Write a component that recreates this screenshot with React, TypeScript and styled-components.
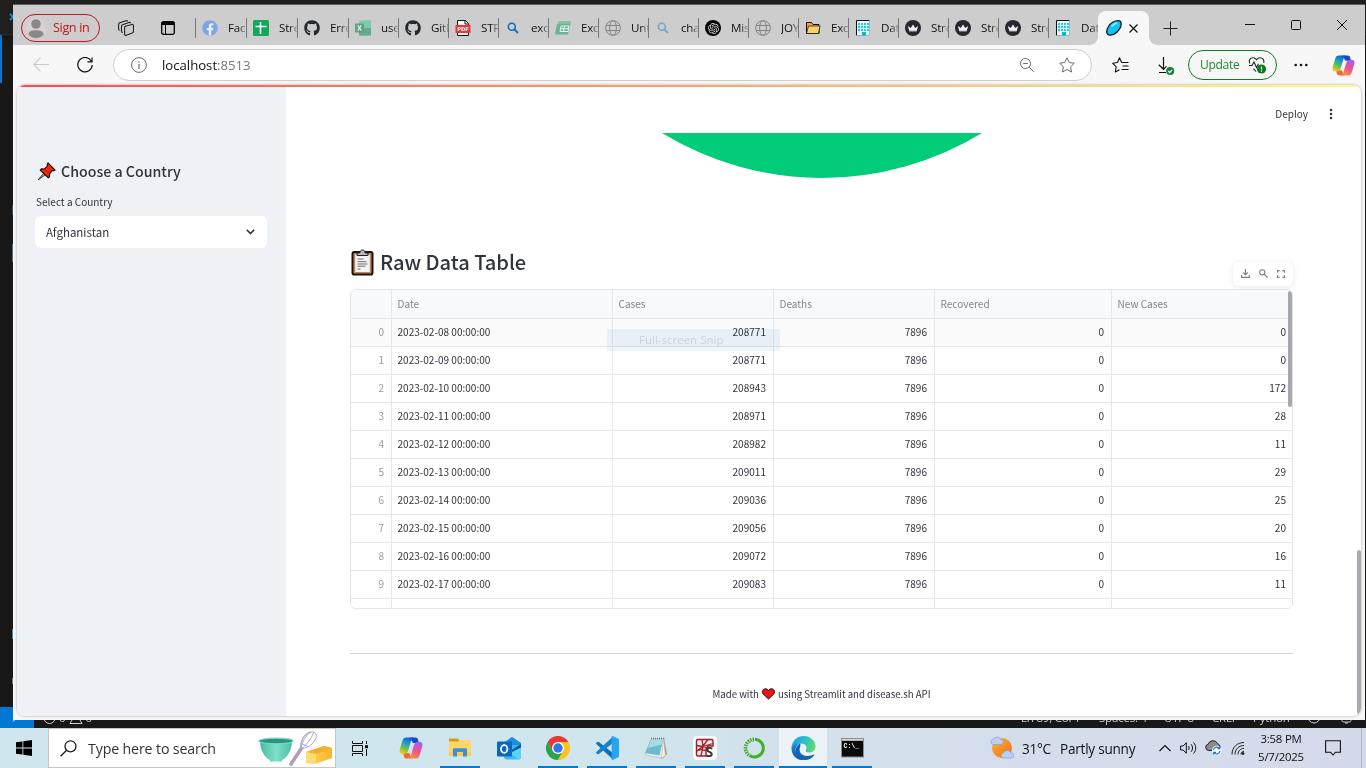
import React from "react";
import styled, { createGlobalStyle, css } from "styled-components";
import { FaGithub, FaFacebook } from "react-icons/fa";
import { SiOpenai } from "react-icons/si";

const uiFont = `"Open Sans", "Noto Sans", sans-serif`;
const pageFont = `"Noto Sans CJK SC", "Noto Sans", sans-serif`;

const GlobalStyle = createGlobalStyle`
  * { box-sizing: border-box; }
  body { margin: 0; overflow: hidden; font-family: ${uiFont}; }
  svg { display: block; flex: none; }
`;

/* ---------- desktop ---------- */

const Screen = styled.div`
  width: 1366px;
  height: 768px;
  display: flex;
  flex-direction: column;
  background: #181818;
`;

const Desktop = styled.div`
  position: relative;
  height: 728px;
  display: flex;
  flex-direction: column;
  background: #181818;
  overflow: hidden;
`;

const EditorTop = styled.div`
  height: 35px;
  background: #1f1f1f;
  border-bottom: 1px solid #2b2b2b;
  svg { margin: 12px 0 0 9px; }
`;

const EditorRail = styled.div`
  flex: 1;
  display: flex;
  flex-direction: column;
  align-items: flex-start;
`;

const RailMarker = styled.div`
  width: 2px;
  height: 48px;
  background: #0078d4;
`;

const RailGlyph = styled.div<{ $top: number; $height: number; $color: string }>`
  width: 1px;
  height: ${(p) => p.$height}px;
  margin: ${(p) => p.$top}px 0 0 12px;
  background: ${(p) => p.$color};
`;

const StatusBar = styled.div`
  height: 21px;
  display: flex;
  align-items: center;
  background: #181818;
  border-top: 1px solid #2b2b2b;
  color: #ccc;
  font-size: 11.5px;
  line-height: 20px;
  white-space: nowrap;
`;

const RemoteBadge = styled.div`
  width: 34px;
  height: 21px;
  margin-top: -1px;
  background: #0078d4;
  svg { margin: 5px 0 0 12px; }
`;

const StatusProblems = styled.div`
  display: flex;
  align-items: center;
  gap: 3px;
  margin-left: 9px;
  width: 978px;
`;

const StatusItem = styled.span<{ $width: number }>`
  width: ${(p) => p.$width}px;
  letter-spacing: -0.2px;
`;

/* ---------- browser window ---------- */

const BrowserWindow = styled.div`
  position: absolute;
  left: 13px;
  top: 4px;
  width: 1352px;
  height: 716px;
  display: flex;
  flex-direction: column;
  background: #f7f7f7;
  border-top: 1px solid #606060;
`;

const TitleBar = styled.div`
  height: 40px;
  padding: 6px 0 0 8px;
  display: flex;
  align-items: center;
  background: #cdcdcd;
`;

const SignIn = styled.div`
  width: 79px;
  height: 28px;
  display: flex;
  align-items: center;
  gap: 7px;
  padding-left: 4px;
  border: 1px solid #c4161c;
  border-radius: 14px;
  color: #c4161c;
  font-size: 12.6px;
  line-height: 20px;
  letter-spacing: -0.35px;
  white-space: nowrap;
`;

const BarIcon = styled.div<{ $left: number }>`
  margin-left: ${(p) => p.$left}px;
  display: flex;
`;

const TabStrip = styled.div`
  display: flex;
  align-items: center;
  margin-left: 20px;
`;

const TabDivider = styled.div`
  width: 1px;
  height: 20px;
  background: #777;
`;

const Tab = styled.div<{ $width: number; $last?: boolean }>`
  width: ${(p) => p.$width}px;
  height: 20px;
  padding-left: 6px;
  display: flex;
  align-items: center;
  gap: 10px;
  ${(p) => !p.$last && css`border-right: 1px solid #777;`}
`;

const TabTitle = styled.span`
  flex: 1;
  min-width: 0;
  overflow: hidden;
  white-space: nowrap;
  font-size: 11.6px;
  line-height: 20px;
  letter-spacing: -0.2px;
  color: #111;
  mask-image: linear-gradient(to right, #000 55%, rgba(0, 0, 0, 0.25) 100%);
`;

const ActiveTab = styled.div`
  position: relative;
  width: 51px;
  height: 34px;
  margin-left: -1px;
  padding-left: 8px;
  display: flex;
  align-items: center;
  gap: 7px;
  background: #f7f7f7;
  border-radius: 8px 8px 0 0;
  &::before, &::after {
    content: "";
    position: absolute;
    bottom: 0;
    width: 8px;
    height: 8px;
  }
  &::before { left: -8px; background: radial-gradient(circle at 0 0, transparent 7.5px, #f7f7f7 8px); }
  &::after { right: -8px; background: radial-gradient(circle at 100% 0, transparent 7.5px, #f7f7f7 8px); }
`;

const WindowControls = styled.div`
  display: flex;
  align-self: flex-start;
  margin: -6px 0 0 auto;
`;

const ControlButton = styled.div`
  width: 46px;
  height: 40px;
  display: flex;
  align-items: center;
  justify-content: center;
`;

const Toolbar = styled.div`
  height: 40px;
  padding-left: 20px;
  display: flex;
  align-items: center;
`;

const AddressBar = styled.div`
  width: 979px;
  height: 32px;
  margin-left: 20px;
  padding: 0 16px 0 17px;
  display: flex;
  align-items: center;
  background: #fff;
  border: 1px solid #cecece;
  border-radius: 16px;
`;

const Url = styled.div`
  flex: 1;
  margin-left: 15px;
  font-size: 13.2px;
  line-height: 20px;
  letter-spacing: -0.02px;
  color: #111;
  span { color: #767676; }
`;

const UpdateButton = styled.div`
  width: 89px;
  height: 30px;
  margin-left: 13px;
  padding: 0 9px 0 11px;
  display: flex;
  align-items: center;
  justify-content: space-between;
  border: 1px solid #0f7b26;
  border-radius: 15px;
  color: #1a8a34;
  font-size: 12.1px;
  letter-spacing: -0.35px;
  line-height: 20px;
`;

/* ---------- web page ---------- */

const Viewport = styled.div`
  width: 1344px;
  height: 631px;
  margin-left: 4px;
  display: flex;
  flex-direction: column;
  background: #fff;
  border-radius: 8px;
  overflow: hidden;
  position: relative;
  box-shadow: 0 0 2px 1px rgba(0, 0, 0, 0.15);
  font-family: ${pageFont};
  color: #31333f;
`;

const Decoration = styled.div`
  height: 2px;
  background: linear-gradient(to right, #ff4b4b, #fffd80);
`;

const Body = styled.div`
  flex: 1;
  min-height: 0;
  display: flex;
`;

const Sidebar = styled.aside`
  width: 269px;
  padding: 72px 19px 0 18px;
  background: #eef2f7;
`;

const SideHeading = styled.h2`
  margin: 0;
  height: 24px;
  display: flex;
  align-items: center;
  gap: 5px;
  padding-left: 2px;
  font-size: 14.2px;
  line-height: 24px;
  font-weight: 500;
  white-space: nowrap;
`;

const FieldLabel = styled.div`
  margin: 10px 0 6px 1px;
  font-size: 10px;
  line-height: 17px;
`;

const SelectBox = styled.div`
  height: 32px;
  padding: 0 12px 0 11px;
  display: flex;
  align-items: center;
  justify-content: space-between;
  background: #fff;
  border-radius: 6px;
  font-size: 11.5px;
  line-height: 20px;
`;

const Main = styled.main`
  flex: 1;
  display: flex;
  flex-direction: column;
`;

const PageHeader = styled.header`
  height: 46px;
  padding: 7px 28px 0 0;
  display: flex;
  align-items: center;
  justify-content: flex-end;
  gap: 21px;
  font-size: 10px;
  line-height: 16px;
`;

const Content = styled.div`
  padding: 0 68px 0 64px;
  display: flex;
  flex-direction: column;
`;

const ChartTail = styled.div`
  height: 112px;
  display: flex;
  justify-content: center;
`;

const SectionRow = styled.div`
  height: 44px;
  display: flex;
  justify-content: space-between;
`;

const SectionTitle = styled.h3`
  margin: 0;
  height: 34px;
  display: flex;
  align-items: center;
  gap: 6px;
  padding-left: 1px;
  font-size: 20.1px;
  line-height: 30px;
  font-weight: 500;
  letter-spacing: -0.05px;
  white-space: nowrap;
`;

const TableTools = styled.div`
  width: 60px;
  height: 24px;
  margin-top: 17px;
  padding: 0 1px 1px 0;
  display: flex;
  align-items: center;
  justify-content: center;
  gap: 9px;
  background: #fff;
  border-radius: 6px;
  box-shadow: 0 1px 6px rgba(0, 0, 0, 0.1);
`;

const DataTable = styled.div`
  position: relative;
  height: 320px;
  border: 1px solid #e3e5e9;
  border-radius: 6px;
  overflow: hidden;
`;

const TableRow = styled.div<{ $kind?: "head" | "hover" }>`
  display: grid;
  grid-template-columns: 41px 221px 161px 161px 177px 180px;
  height: ${(p) => (p.$kind === "head" ? 29 : 28)}px;
  border-bottom: 1px solid #e6e7ea;
  background: ${(p) => (p.$kind === "head" ? "#f8f9fb" : p.$kind === "hover" ? "#fafafa" : "#fff")};
  color: ${(p) => (p.$kind === "head" ? "#83858c" : "#31333f")};
  line-height: ${(p) => (p.$kind === "head" ? 28 : 26)}px;
`;

const Cell = styled.div<{ $right?: boolean; $muted?: boolean }>`
  padding: 0 7px 0 5.5px;
  border-right: 1px solid #e6e7ea;
  font-size: 10.05px;
  white-space: nowrap;
  text-align: ${(p) => (p.$right ? "right" : "left")};
  ${(p) => p.$muted && css`color: #9a9ca3;`}
  &:last-child { border-right: 0; padding-right: 6px; }
`;

const TableScrollbar = styled.div`
  position: absolute;
  right: 0;
  top: 1px;
  width: 4px;
  height: 116px;
  border-radius: 2px;
  background: #a6a7ae;
`;

const Rule = styled.hr`
  width: 100%;
  height: 1px;
  margin: 44px 0 31px;
  border: 0;
  background: #d5d6d9;
`;

const Footer = styled.footer`
  display: flex;
  align-items: center;
  justify-content: center;
  gap: 3px;
  height: 18px;
  font-size: 9.62px;
  line-height: 18px;
`;

const PageScrollbar = styled.div`
  position: absolute;
  right: 0;
  top: 465px;
  width: 4px;
  height: 164px;
  border-radius: 2px;
  background: #a9a9af;
`;

const SnipHint = styled.div`
  position: absolute;
  left: 607px;
  top: 329px;
  width: 173px;
  height: 22px;
  padding-left: 32px;
  background: #edf5fc;
  mix-blend-mode: multiply;
  color: #d3d7dc;
  font-size: 11.5px;
  line-height: 21px;
  white-space: nowrap;
`;

/* ---------- taskbar ---------- */

const TaskBar = styled.div`
  height: 40px;
  display: flex;
  background: linear-gradient(to right, #cfe6ee 0%, #d0e5ee 45%, #d4dfec 65%, #d5daea 100%);
`;

const TaskButton = styled.div<{ $state?: "open" | "active" }>`
  width: 48px;
  height: 40px;
  margin-right: 1px;
  display: flex;
  flex-direction: column;
  align-items: center;
  background: ${(p) => (p.$state === "active" ? "#ecf2f7" : "transparent")};
  &::after {
    content: "";
    width: ${(p) => (p.$state === "active" ? 48 : 40)}px;
    height: 2px;
    background: ${(p) => (p.$state ? "#0078d4" : "transparent")};
  }
`;

const TaskIcon = styled.div`
  height: 38px;
  padding-top: 2px;
  display: flex;
  align-items: center;
`;

const SystemButton = styled.div`
  width: 48px;
  height: 40px;
  display: flex;
  align-items: center;
  justify-content: center;
`;

const Pinned = styled.div`
  display: flex;
  margin-left: 3px;
`;

const SearchBox = styled.div`
  width: 288px;
  height: 40px;
  padding: 0 2px 0 11px;
  display: flex;
  align-items: center;
  background: #fff;
  border: 1px solid #c6c6c6;
`;

const SearchText = styled.span`
  flex: 1;
  margin-left: 11px;
  font-size: 14.2px;
  letter-spacing: -0.14px;
  color: #333;
  white-space: nowrap;
`;

const Weather = styled.div`
  display: flex;
  align-items: center;
  margin-left: 113px;
  width: 146px;
  font-size: 13.6px;
  letter-spacing: -0.25px;
  color: #111;
  white-space: nowrap;
  span:nth-of-type(1) { width: 38px; margin-left: 8px; }
`;

const Tray = styled.div`
  display: flex;
  align-items: center;
  gap: 8.500px;
  margin-left: 23px;
`;

const Clock = styled.div`
  width: 56px;
  margin-left: -1px;
  text-align: center;
  font-size: 11.4px;
  line-height: 18px;
  letter-spacing: -0.2px;
  color: #111;
`;

const TrayEnd = styled.div`
  flex: 1;
  display: flex;
  align-items: center;
  padding-left: 16px;
  border-right: 1px solid #aeb6c2;
  margin-right: 4px;
`;

/* ---------- icons ---------- */

const CopilotIcon = ({ id, size }: { id: string; size: number }) => (
  <svg width={size} height={size} viewBox="0 0 24 24">
    <defs>
      <linearGradient id={`${id}-a`} x1="0.7" y1="0" x2="0.3" y2="1">
        <stop offset="0" stopColor="#1556d6" />
        <stop offset="0.35" stopColor="#1c9cc9" />
        <stop offset="0.65" stopColor="#5fbf55" />
        <stop offset="1" stopColor="#f6c414" />
      </linearGradient>
      <linearGradient id={`${id}-b`} x1="0.7" y1="0" x2="0.3" y2="1">
        <stop offset="0" stopColor="#a064ee" />
        <stop offset="0.5" stopColor="#ee4f92" />
        <stop offset="1" stopColor="#fb8f3c" />
      </linearGradient>
    </defs>
    <path d="M11 1.5h5.2c1.6 0 2.4.9 2.8 2.3l.9 3.2h-6z" fill="#1748c8" />
    <path d="M13 22.500H7.800c-1.600 0-2.400-.9-2.800-2.300L4.100 17h6z" fill="#f26a3c" />
    <path d="M7.500 1.500h7c-1.500.6-2 1.900-2.500 3.600L9.300 14c-.8 2.600-1.700 4-4.300 4H3.500C.8 18 0 16 .8 13.300L3.300 5C4 2.600 5 1.500 7.500 1.500z" fill={`url(#${id}-a)`} />
    <path d="M16.500 22.500h-7c1.500-.6 2-1.900 2.500-3.600L14.700 10c.8-2.600 1.700-4 4.300-4h1.500c2.700 0 3.500 2 2.700 4.700L20.700 19c-.7 2.400-1.700 3.500-4.200 3.500z" fill={`url(#${id}-b)`} />
  </svg>
);

const GlobeIcon = () => (
  <svg width="16" height="16" viewBox="0 0 16 16" fill="none" stroke="#858585">
    <circle cx="8" cy="8" r="7.400" />
    <ellipse cx="8" cy="8" rx="3.400" ry="7.400" />
    <path d="M1.300 5.500h13.400M1.300 10.500h13.400" />
  </svg>
);

const SearchTabIcon = ({ color }: { color: string }) => (
  <svg width="16" height="16" viewBox="0 0 16 16" fill="none" stroke={color}>
    <circle cx="6.800" cy="6.800" r="3.500" strokeWidth="1.600" />
    <path d="M9.400 9.400l3.600 3.600" strokeWidth="2" />
  </svg>
);

const SheetIcon = () => (
  <svg width="16" height="16" viewBox="0 0 16 16">
    <rect width="16" height="16" rx="1.500" fill="#0fa958" />
    <path d="M2.500 6.500h11M7.500 2v12" stroke="#fff" strokeWidth="1.600" />
  </svg>
);

const ExcelIcon = () => (
  <svg width="16" height="16" viewBox="0 0 16 16">
    <rect x="4" y="0.500" width="12" height="15" rx="1" fill="#7fc9a8" />
    <path d="M10 .5h6v5h-6z" fill="#76cfae" />
    <path d="M4 8h12v7.500H4z" fill="#6aa98c" />
    <rect y="3.500" width="9" height="9" rx="1" fill="#5fa286" />
    <path d="M2.800 5.500l3.400 5M6.200 5.500l-3.400 5" stroke="#fff" strokeWidth="1.200" />
  </svg>
);

const ExcelOnlineIcon = () => (
  <svg width="16" height="16" viewBox="0 0 16 16">
    <path d="M3.500 1H15a1 1 0 0 1 1 1l-1.500 8H2z" fill="#7cc4a2" />
    <path d="M2 4h13l-2 10.500H1c-1 0-1-1-.8-2z" fill="#6ab494" />
    <path d="M6 6h8l-1 5.500H5zM9.500 6l-1 5.500M5.500 8.700h8" fill="none" stroke="#e9f6ef" strokeWidth="1" />
  </svg>
);

const PdfIcon = () => (
  <svg width="16" height="16" viewBox="0 0 16 16">
    <path d="M2.500 .5h8l3 3v12h-11z" fill="#fff" stroke="#111" />
    <path d="M10 .5v3.500h3.500" fill="none" stroke="#111" />
    <rect x="0.500" y="5" width="15" height="8" rx="0.500" fill="#f6302f" />
    <text x="8" y="11" textAnchor="middle" fontFamily="DejaVu Sans, sans-serif" fontWeight="700" fontSize="5.200" fill="#fff">PDF</text>
  </svg>
);

const FolderTabIcon = () => (
  <svg width="16" height="16" viewBox="0 0 16 16" stroke="#111" strokeWidth="1">
    <path d="M1.500 13.500v-11h5l1.500 2h6v9z" fill="#f0a732" />
    <path d="M1.500 13.500l2-7.500h11.500l-1.500 7.500z" fill="#ffd06a" strokeWidth="0.700" />
  </svg>
);

const BuildingIcon = () => (
  <svg width="16" height="16" viewBox="0 0 16 16">
    <path d="M1 .5h14V15H1z" fill="#e9fafc" />
    <path d="M1.500 16V.5h13" fill="none" stroke="#111" />
    <path d="M14.500 .5V15.500H1" fill="none" stroke="#7fb4bf" strokeWidth="0.800" />
    {[3, 6, 9].map((y) =>
      [3, 6, 9, 12].map((x) => <rect key={`${x}-${y}`} x={x} y={y} width="2" height="2" fill="#12d0f2" />)
    )}
    <path d="M7 12h4v3.500H7z" fill="#0ab4dc" />
  </svg>
);

const CrownIcon = () => (
  <svg width="16" height="16" viewBox="0 0 16 16">
    <circle cx="8" cy="8" r="8" fill="#262730" />
    <path d="M2.800 6l3 2L8 4.500 10.200 8l3-2-1.600 5.200H4.400z" fill="#f1f1f3" />
    <path d="M4.500 10.500h7v.8h-7z" fill="#aaabb2" />
  </svg>
);

const OpenAiBadge = styled.div`
  width: 16px;
  height: 16px;
  display: flex;
  align-items: center;
  justify-content: center;
  border-radius: 50%;
  background: #000;
  color: #ddd;
  flex: none;
`;

const PushpinIcon = () => (
  <svg width="19" height="19" viewBox="0 0 19 19">
    <path d="M1 18l6-7 1.500 1.500z" fill="#ccc" stroke="#222" strokeWidth="0.900" />
    <path d="M11 1l7 7-1.600.8-1.200-.2-2.700 3.200.1 3-1.300.9-8-7.600 1-1.200 3.200.1 2.900-2.900-.2-1.600z" fill="#f3290b" stroke="#1c0906" strokeWidth="1.100" />
    <path d="M7.800 7.200l4.500 4.400" stroke="#b81c08" strokeWidth="0.800" />
  </svg>
);

const ClipboardIcon = () => (
  <svg width="23" height="27" viewBox="0 0 23 27">
    <rect x="1.500" y="3" width="20" height="22.500" rx="1.800" fill="#c68350" stroke="#161616" strokeWidth="2" />
    <rect x="4.200" y="5.500" width="14.600" height="17.500" fill="#f4f4f4" />
    <path d="M6 6.500V4h2.800C9.300 1.700 10 1 11.500 1s2.200.7 2.700 3H17v2.500z" fill="#b9b9b9" stroke="#222" strokeWidth="1" />
    <path d="M6.500 10h6M6.500 12.700h9M6.500 15h10M6.500 17.200h8M6.500 20h3" stroke="#6e6e6e" strokeWidth="1" />
  </svg>
);

const HeartIcon = () => (
  <svg width="13" height="12" viewBox="0 0 13 12">
    <path d="M6.500 11L1.200 6C-.5 3.500 1.300.8 3.500.8c1.300 0 2.400.7 3 2 .6-1.300 1.700-2 3-2 2.200 0 4 2.700 2.300 5.200z" fill="#fb0d12" stroke="#16090a" strokeWidth="1" />
  </svg>
);

const CloudShape = ({ x, y }: { x: number; y: number }) => (
  <path transform={`translate(${x} ${y})`} d="M3 8a2.600 2.600 0 0 1-.2-5.200A3.900 3.900 0 0 1 10 3a2.500 2.500 0 0 1 .5 5z" fill="#b9d0f4" stroke="#84a5dd" strokeWidth="0.700" />
);

const SearchArt = () => (
  <svg width="75" height="36" viewBox="0 0 75 36">
    <defs>
      <linearGradient id="bowl" x1="0" x2="1">
        <stop offset="0" stopColor="#49b8a0" />
        <stop offset="0.500" stopColor="#7fe0c8" />
        <stop offset="1" stopColor="#4dbfa6" />
      </linearGradient>
      <linearGradient id="butter" x1="0" x2="1">
        <stop offset="0" stopColor="#ffd65a" />
        <stop offset="1" stopColor="#f7b52d" />
      </linearGradient>
    </defs>
    <path d="M2 11h32c0 9-5 17-10 19v1.500H12V30C7 28 2 20 2 11z" fill="url(#bowl)" />
    <ellipse cx="18" cy="11" rx="17" ry="2.800" fill="#2f927e" stroke="#74dcc4" strokeWidth="1.200" />
    <path d="M33 34l10-15" stroke="#a9a0bd" strokeWidth="3.600" strokeLinecap="round" />
    <g fill="none" stroke="#a99fbc" strokeWidth="0.900">
      <path d="M43 19c-1-7 2-15 9-17 6-1 8 3 5 8-3 6-9 8-14 9z" />
      <path d="M43 19c1-6 4-13 10-17M43 19c5-4 10-9 12.500-16.500M43 19C42 11 47 5 51 2.500" />
      <path d="M44.500 14l6 3" />
    </g>
    <path d="M48 22l18-6 8 2v10l-17 6-9-1z" fill="url(#butter)" />
    <path d="M48 22l18-6 8 2-16 6z" fill="#f4ae2b" />
    <path d="M48 22l10 2v10l-8-1.200c-1.400-.2-2-.8-2-2z" fill="#ffdd73" />
  </svg>
);

const tabs: { title: string; width: number; icon: React.ReactNode }[] = [
  { title: "Face", width: 51, icon: <FaFacebook size={16} color="#7ea6e4" style={{ background: "radial-gradient(circle, #e8eef8 60%, transparent 62%)" }} /> },
  { title: "Stre", width: 51, icon: <SheetIcon /> },
  { title: "Erro", width: 51, icon: <FaGithub size={16} color="#24292f" /> },
  { title: "user", width: 50, icon: <ExcelIcon /> },
  { title: "GitH", width: 50, icon: <FaGithub size={16} color="#24292f" /> },
  { title: "STR", width: 50, icon: <PdfIcon /> },
  { title: "exc", width: 50, icon: <SearchTabIcon color="#0f6cc4" /> },
  { title: "Exc", width: 50, icon: <ExcelOnlineIcon /> },
  { title: "Unt", width: 50, icon: <GlobeIcon /> },
  { title: "cha", width: 50, icon: <SearchTabIcon color="#72a5cf" /> },
  { title: "Mis", width: 50, icon: <OpenAiBadge><SiOpenai size={11} /></OpenAiBadge> },
  { title: "JOY", width: 50, icon: <GlobeIcon /> },
  { title: "Exc", width: 50, icon: <FolderTabIcon /> },
  { title: "Dat", width: 50, icon: <BuildingIcon /> },
  { title: "Stre", width: 50, icon: <CrownIcon /> },
  { title: "Stre", width: 50, icon: <CrownIcon /> },
  { title: "Stre", width: 50, icon: <CrownIcon /> },
  { title: "Dat", width: 50, icon: <BuildingIcon /> },
];

const rows: [string, number, number][] = [
  ["2023-02-08", 208771, 0],
  ["2023-02-09", 208771, 0],
  ["2023-02-10", 208943, 172],
  ["2023-02-11", 208971, 28],
  ["2023-02-12", 208982, 11],
  ["2023-02-13", 209011, 29],
  ["2023-02-14", 209036, 25],
  ["2023-02-15", 209056, 20],
  ["2023-02-16", 209072, 16],
  ["2023-02-17", 209083, 11],
];

const ExplorerIcon = () => (
  <svg width="22" height="22" viewBox="0 0 22 22">
    <path d="M0 2.500C0 2 .4 1.500 1 1.500h8l1 1.500h11v3H0z" fill="#d79a12" />
    <path d="M0 4.500h9l1.500-1.500H21c.6 0 1 .4 1 1V19H0z" fill="#ffd766" />
    <path d="M0 15h22v4H0z" fill="#fbcb52" />
    <path d="M4 19.500v-7c0-.8.500-1.300 1.300-1.300h11.400c.8 0 1.300.5 1.300 1.300v7h-4V15H8v4.500z" fill="#3a8fd6" />
  </svg>
);

const OutlookIcon = () => (
  <svg width="24" height="23" viewBox="0 0 24 23">
    <path d="M5 7l9-6.500c.6-.4 1.300-.4 2 0L24 6v4H5z" fill="#1a8fdc" />
    <path d="M7 8h17v12c0 1.500-1 2.500-2.500 2.500h-12C8 22.500 7 21.500 7 20z" fill="#38bdf2" />
    <path d="M13 14L24 7v4l-10 6z" fill="#0b55a5" />
    <path d="M24 10.500V20c0 1.500-1 2.500-2.500 2.500L13 16z" fill="#58d3fa" />
    <rect y="4.500" width="15" height="15" rx="1" fill="#0a66c2" />
    <ellipse cx="7.200" cy="12" rx="3.200" ry="3.800" fill="none" stroke="#fff" strokeWidth="1.800" />
  </svg>
);

const ChromeIcon = () => (
  <svg width="24" height="24" viewBox="0 0 24 24">
    <path d="M22.400 6A12 12 0 0 0 1.600 6L6.800 15 12 6z" fill="#e33b2e" />
    <path d="M1.600 6A12 12 0 0 0 12 24l5.200-9H6.800z" fill="#2da14c" />
    <path d="M22.400 6H12l5.200 9L12 24A12 12 0 0 0 22.400 6z" fill="#fcc31e" />
    <circle cx="12" cy="12" r="6" fill="#fff" />
    <circle cx="12" cy="12" r="4.700" fill="#2b76e8" />
  </svg>
);

const CodeIcon = () => (
  <svg width="24" height="24" viewBox="0 0 24 24">
    <path d="M.8 7.500L2.300 6c.5-.4 1-.3 1.500 0L18 17v6.500z" fill="#0a72bc" />
    <path d="M.8 16.500L2.300 18c.5.400 1 .3 1.500 0L18 7V.500z" fill="#1583cb" />
    <path d="M17.500 0L23 2.500c.7.300 1 .8 1 1.500v16c0 .7-.3 1.200-1 1.500L17.500 24c-.4 0-.8-.3-.8-1V1c0-.7.400-1 .8-1z" fill="#28a4f0" />
  </svg>
);

const NotepadIcon = () => (
  <svg width="24" height="24" viewBox="0 0 24 24">
    <path d="M20 2l3 16-4 4.500-2-1z" fill="#a99b84" />
    <path d="M7 3l14-1-3 20-17-3z" fill="#e9eef0" stroke="#9aa7ab" strokeWidth="0.500" />
    <path d="M7 3.500L19.500 2.500 15.500 19.500 1 17z" fill="#6dbcce" />
    <path d="M7 3.500l12.500-1-1.500 6L4 12z" fill="#a4dbe4" />
    <path d="M7 2.500h13" stroke="#777" strokeWidth="1.400" strokeDasharray="1 1" />
    <path d="M19.500 2.500l2 17-4 3z" fill="#f4f4f2" stroke="#b3a48a" strokeWidth="0.500" />
  </svg>
);

const SpyderIcon = () => (
  <svg width="24" height="24" viewBox="0 0 24 24">
    <rect width="24" height="24" rx="4" fill="#faf8f8" />
    <path d="M3.500 5c0-1 .5-1.500 1.500-1.500h13.500c1 0 1.500.5 1.500 1.500v5h-5l-2 3v7H5c-1 0-1.500-.5-1.500-1.500z" fill="#f3e9e9" stroke="#96202b" strokeWidth="1.400" />
    <path d="M3.500 9.500l6 1 10.500-3M9 3.500l1 7-2 9.500M9.500 10.500l5 1.500M15 3.500l-5.500 7M3.500 15l5-1.500 4.500 1M9.500 10.500l-6 5" stroke="#a51d2a" strokeWidth="1.300" fill="none" />
    <text x="12.500" y="20.500" fontFamily="Open Sans, sans-serif" fontWeight="700" fontSize="14" fill="#333">S</text>
  </svg>
);

const AnacondaIcon = () => (
  <svg width="22" height="22" viewBox="0 0 22 22" fill="none" stroke="#43b02a">
    <path d="M12 2.200A8.900 8.900 0 1 1 6.500 18.500" strokeWidth="3" />
    <path d="M11 2.200A8.900 8.900 0 0 0 6 18.300" strokeWidth="3.400" strokeDasharray="1.500 1" />
    <path d="M10.500 4.200A7 7 0 0 0 6.500 16.500" strokeWidth="1" strokeDasharray="1 1.500" />
  </svg>
);

const EdgeIcon = () => (
  <svg width="25" height="24" viewBox="0 0 25 24">
    <defs>
      <linearGradient id="edge-top" x1="0" x2="1" y1="0.300" y2="0.500">
        <stop offset="0" stopColor="#199fdc" />
        <stop offset="0.550" stopColor="#2cc2cf" />
        <stop offset="1" stopColor="#60dc5e" />
      </linearGradient>
      <linearGradient id="edge-low" x1="0" x2="0" y1="0" y2="1">
        <stop offset="0" stopColor="#1b8be0" />
        <stop offset="1" stopColor="#0c59a4" />
      </linearGradient>
    </defs>
    <path d="M.5 11C1.500 4.500 6.500 0 12.500 0c7 0 12 5 12 10.500 0 3.500-2.800 6-6.300 6-3.200 0-4.200-1.300-3.200-2.800 1.800-3-.3-6.200-5-6.200C5.500 7.500 2 9 .5 11z" fill="url(#edge-top)" />
    <path d="M.5 11C2 8.500 5.500 7 9 7.300c-3 1.200-5 4.500-4.300 8.200C5.500 19.500 9 23 14 23.900 6 25 0 19.500.5 11z" fill="url(#edge-low)" />
    <path d="M9.200 11c-2.200 4.500 1.500 9 7.500 9 2.500 0 4.500-.8 6-1.500.5-.2.800.2.500.7C21 22.500 17 24.300 13 23.900 8 23.500 4.500 19.500 4.500 15c0-3.500 2-6.500 5-7.700z" fill="#1363b5" />
  </svg>
);

const TerminalIcon = () => (
  <svg width="23" height="20" viewBox="0 0 23 20">
    <rect x="0.500" y="0.500" width="22" height="18.500" fill="#0a0a0a" stroke="#8e8e8e" />
    <rect x="1" y="1" width="21" height="1.800" fill="#d8d8d8" />
    <text x="2.500" y="9.500" fontFamily="Liberation Mono, monospace" fontWeight="700" fontSize="6.500" fill="#fff">C:\_</text>
  </svg>
);

export default function App() {
  return (
    <>
      <GlobalStyle />
      <Screen>
        <Desktop>
          <EditorTop>
            <svg width="8" height="10" viewBox="0 0 8 10"><path d="M1 2l5 5M1 8l5-5" stroke="#1787d6" strokeWidth="2" /></svg>
          </EditorTop>
          <EditorRail>
            <RailMarker />
            <RailGlyph $top={122} $height={10} $color="#31506a" />
            <RailGlyph $top={29} $height={18} $color="#4c6b86" />
            <RailGlyph $top={367} $height={10} $color="#3a83bd" />
            <RailGlyph $top={39} $height={6} $color="#777" />
          </EditorRail>
          <StatusBar>
            <RemoteBadge>
              <svg width="10" height="11" viewBox="0 0 10 11" fill="none" stroke="#fff"><path d="M4 6.500L1 9.500" /></svg>
            </RemoteBadge>
            <StatusProblems>
              <svg width="13" height="13" viewBox="0 0 13 13" fill="none" stroke="#ccc"><circle cx="6.500" cy="6" r="5.500" /><path d="M4.500 4l4 4M8.500 4l-4 4" /></svg>
              <span>0</span>
              <svg width="14" height="13" viewBox="0 0 14 13" fill="none" stroke="#ccc"><path d="M7 1l6 10.500H1z" /></svg>
              <span>0</span>
            </StatusProblems>
            <StatusItem $width={78}>Ln 89, Col 1</StatusItem>
            <StatusItem $width={65}>Spaces: 4</StatusItem>
            <StatusItem $width={48}>UTF-8</StatusItem>
            <StatusItem $width={41}>CRLF</StatusItem>
            <StatusItem $width={55}>Python</StatusItem>
            <svg width="44" height="14" viewBox="0 0 44 14" fill="none" stroke="#ccc">
              <circle cx="6" cy="6" r="6" /><path d="M3 8h6M36 11c-3 0-2-2-1-4 0-4 1-6 4-6s3 2 3 5c1 3 2 5-1 5zM37 12h3" />
            </svg>
          </StatusBar>

          <BrowserWindow>
            <TitleBar>
              <SignIn>
                <svg width="20" height="20" viewBox="0 0 20 20">
                  <circle cx="10" cy="10" r="10" fill="#d9d3cf" />
                  <circle cx="10" cy="6" r="4.800" fill="#8b8784" />
                  <path d="M2.500 16.500c0-3 2.500-4.300 7.500-4.300s7.500 1.300 7.500 4.300C15.500 19 13 20 10 20s-5.500-1-7.500-3.500z" fill="#8b8784" />
                </svg>
                Sign in
              </SignIn>
              <BarIcon $left={18}>
                <svg width="16" height="16" viewBox="0 0 16 16" fill="none" stroke="#222" strokeWidth="1.100" strokeLinejoin="round">
                  <path d="M6.800 6.600l7-2.200c.9-.2 1.700.3 1.700 1.300v5.500c0 .8-.4 1.400-1.200 1.700l-6 2.400c-.9.300-1.700-.2-1.700-1.200V7.800c0-.6.100-1 .2-1.200z" />
                  <path d="M4.800 12.500c-.8 0-1.300-.5-1.300-1.300V6.300c0-.8.400-1.300 1.100-1.600L11 2.500c.8-.2 1.400 0 1.600.7" />
                  <path d="M1.800 10.200C1 10 .6 9.600.6 8.900V4.400c0-.8.400-1.300 1.100-1.600L8 .700c.8-.2 1.400 0 1.600.6" />
                </svg>
              </BarIcon>
              <BarIcon $left={27}>
                <svg width="14" height="14" viewBox="0 0 14 14" fill="none" stroke="#000" strokeWidth="1.300">
                  <rect x="0.700" y="0.700" width="12.600" height="12.600" rx="1.800" />
                  <path d="M.7 2.500h12.600" strokeWidth="3" />
                  <path d="M4.500 4v9" strokeWidth="1" />
                </svg>
              </BarIcon>
              <TabStrip>
                <TabDivider />
                {tabs.map((t, i) => (
                  <Tab key={i} $width={t.width} $last={i === tabs.length - 1}>
                    {t.icon}
                    <TabTitle>{t.title}</TabTitle>
                  </Tab>
                ))}
                <ActiveTab>
                  <svg width="16" height="16" viewBox="0 0 16 16">
                    <path d="M2.200 7C4.500 3 8.500.700 12.500.700c3.200 0 3.400 4.500 1.200 8-2.500 4-6.500 6.800-10.200 6.400C0 14.500.2 10.300 2.200 7z" fill="#12c4f0" stroke="#0a1a26" strokeWidth="1.300" />
                    <path d="M5.500 6.500c2-2.200 3.800-3.200 5.500-3.400" stroke="#7decff" strokeWidth="1.800" fill="none" />
                  </svg>
                  <svg width="9" height="9" viewBox="0 0 9 9" stroke="#111" strokeWidth="1.200"><path d="M.5.5l8 8M8.500.5l-8 8" /></svg>
                </ActiveTab>
              </TabStrip>
              <BarIcon $left={14}>
                <svg width="15" height="15" viewBox="0 0 15 15" stroke="#222" strokeWidth="1"><path d="M7.500.5v14M.5 7.500h14" /></svg>
              </BarIcon>
              <WindowControls>
                <ControlButton><svg width="10" height="10" viewBox="0 0 10 10"><path d="M0 4.500h10" stroke="#111" /></svg></ControlButton>
                <ControlButton><svg width="10" height="10" viewBox="0 0 10 10"><rect x="0.500" y="0.500" width="9" height="9" rx="1" fill="none" stroke="#111" /></svg></ControlButton>
                <ControlButton><svg width="10" height="10" viewBox="0 0 10 10"><path d="M0 0l10 10M10 0L0 10" stroke="#111" /></svg></ControlButton>
              </WindowControls>
            </TitleBar>

            <Toolbar>
              <svg width="16" height="16" viewBox="0 0 16 16" fill="none" stroke="#c9c9c9" strokeWidth="1.100"><path d="M16 7.500H1M7.500 .7L.8 7.500l6.700 6.800" /></svg>
              <BarIcon $left={28}>
                <svg width="16" height="16" viewBox="0 0 16 16" fill="none" stroke="#111" strokeWidth="1.200"><path d="M14.200 4A7.200 7.200 0 1 0 15.200 8M15 .500v4.300h-4.500" /></svg>
              </BarIcon>
              <AddressBar>
                <svg width="16" height="16" viewBox="0 0 16 16" fill="none" stroke="#6b6b6b"><circle cx="8" cy="8" r="7.400" /><path d="M8 7v5M8 4.200v1.300" strokeWidth="1.200" /></svg>
                <Url>localhost<span>:8513</span></Url>
                <svg width="14" height="14" viewBox="0 0 14 14" fill="none" stroke="#6b6b6b"><circle cx="5.500" cy="5.500" r="5" /><path d="M9.200 9.200L13.700 13.700M3.200 5.500h4.600" /></svg>
                <BarIcon $left={25}>
                  <svg width="16" height="16" viewBox="0 0 16 16" fill="none" stroke="#6b6b6b" strokeLinejoin="round"><path d="M8 .8l2.200 4.700 5.100.7-3.700 3.600.9 5.200L8 12.500 3.500 15l.9-5.200L.7 6.200l5.100-.7z" /></svg>
                </BarIcon>
              </AddressBar>
              <BarIcon $left={20}>
                <svg width="17" height="16" viewBox="0 0 17 16" fill="none" stroke="#111" strokeWidth="1.100" strokeLinejoin="round"><path d="M10.500 5.500H9.700L7.500.800 5.500 5.500.600 6.200l3.600 3.600-.9 5.200 4.200-2.300M9.500 5.500h7M10.500 9h6M9.500 12.500h7" /></svg>
              </BarIcon>
              <BarIcon $left={28}>
                <svg width="18" height="20" viewBox="0 0 18 20" fill="none" stroke="#111" strokeWidth="1.200"><path d="M6.500 2v12M1.800 9.700l4.700 4.600 3-3M2 17.500h7" /><circle cx="13.200" cy="16" r="4" fill="#15803c" stroke="none" /><path d="M11.300 16l1.400 1.500 2.500-2.700" stroke="#fff" /></svg>
              </BarIcon>
              <UpdateButton>
                Update
                <svg width="19" height="17" viewBox="0 0 19 17" fill="none" stroke="#1b2b20" strokeWidth="1.100">
                  <path d="M8 14.500l-2.500-2.800M2 6.500C0 3 2.500.8 5 .8c1.500 0 2.700.8 3.500 2 .8-1.200 2-2 3.500-2 2.500 0 4.500 2 3.700 5M1 8.500h3l2-3.500 2.500 5.500 2-3.700" />
                  <circle cx="13.500" cy="12" r="4.600" fill="#0b7a1e" stroke="none" />
                  <path d="M13.500 9.500v3M13.500 13.500v1.200" stroke="#fff" strokeWidth="1.300" />
                </svg>
              </UpdateButton>
              <BarIcon $left={17}>
                <svg width="14" height="4" viewBox="0 0 14 4" fill="#111"><circle cx="1.700" cy="2" r="1.300" /><circle cx="7" cy="2" r="1.300" /><circle cx="12.300" cy="2" r="1.300" /></svg>
              </BarIcon>
              <BarIcon $left={24}><CopilotIcon id="side" size={23} /></BarIcon>
            </Toolbar>

            <Viewport>
              <Decoration />
              <Body>
                <Sidebar>
                  <SideHeading><PushpinIcon />Choose a Country</SideHeading>
                  <FieldLabel>Select a Country</FieldLabel>
                  <SelectBox>
                    Afghanistan
                    <svg width="9" height="6" viewBox="0 0 9 6" fill="none" stroke="#31333f" strokeWidth="1.600"><path d="M.8.8l3.700 3.700L8.200.8" /></svg>
                  </SelectBox>
                </Sidebar>
                <Main>
                  <PageHeader>
                    Deploy
                    <svg width="4" height="12" viewBox="0 0 4 12" fill="#31333f"><circle cx="2" cy="2" r="1.300" /><circle cx="2" cy="6" r="1.300" /><circle cx="2" cy="10" r="1.300" /></svg>
                  </PageHeader>
                  <Content>
                    <ChartTail>
                      <svg width="322" height="46" viewBox="0 0 322 46"><path d="M1 0h320A307 307 0 0 1 1 0z" fill="#00cc7a" /></svg>
                    </ChartTail>
                    <SectionRow>
                      <SectionTitle><ClipboardIcon />Raw Data Table</SectionTitle>
                      <TableTools>
                        <svg width="9" height="9" viewBox="0 0 9 9" fill="none" stroke="#7c7e86" strokeWidth="1.100"><path d="M4.500 0v5.500M2.200 3.500l2.300 2.300 2.300-2.300M.6 6v2.400h7.800V6" /></svg>
                        <svg width="9" height="9" viewBox="0 0 9 9" fill="none" stroke="#7c7e86" strokeWidth="1.100"><circle cx="3.300" cy="3.300" r="2.600" /><path d="M5.200 5.200l3.300 3.300" /></svg>
                        <svg width="8" height="8" viewBox="0 0 8 8" fill="none" stroke="#7c7e86" strokeWidth="1.100"><path d="M.6 2.700V.6h2M5.400.6h2v2.100M7.400 5.300v2.100h-2M2.600 7.400h-2V5.300" /></svg>
                      </TableTools>
                    </SectionRow>
                    <DataTable>
                      <TableRow $kind="head">
                        <Cell /><Cell>Date</Cell><Cell>Cases</Cell><Cell>Deaths</Cell><Cell>Recovered</Cell><Cell>New Cases</Cell>
                      </TableRow>
                      {rows.map(([date, cases, fresh], i) => (
                        <TableRow key={date} $kind={i === 0 ? "hover" : undefined}>
                          <Cell $right $muted>{i}</Cell>
                          <Cell>{date} 00:00:00</Cell>
                          <Cell $right>{cases}</Cell>
                          <Cell $right>7896</Cell>
                          <Cell $right>0</Cell>
                          <Cell $right>{fresh}</Cell>
                        </TableRow>
                      ))}
                      <TableRow><Cell /><Cell /><Cell /><Cell /><Cell /><Cell /></TableRow>
                      <TableScrollbar />
                    </DataTable>
                    <Rule />
                    <Footer>Made with <HeartIcon /> using Streamlit and disease.sh API</Footer>
                  </Content>
                </Main>
              </Body>
              <PageScrollbar />
            </Viewport>
          </BrowserWindow>
          <SnipHint>Full-screen Snip</SnipHint>
        </Desktop>

        <TaskBar>
          <SystemButton>
            <svg width="16" height="16" viewBox="0 0 16 16"><path d="M0 2.300L6.500 1.400v6.200H0zM7.300 1.300L16 0v7.600H7.300zM0 8.400h6.500v6.200L0 13.700zM7.300 8.400H16V16l-8.700-1.300z" /></svg>
          </SystemButton>
          <SearchBox>
            <svg width="17" height="17" viewBox="0 0 17 17" fill="none" stroke="#222" strokeWidth="1.300"><circle cx="10.500" cy="6.300" r="5.500" /><path d="M6.600 10.300L.6 16.300" /></svg>
            <SearchText>Type here to search</SearchText>
            <SearchArt />
          </SearchBox>
          <SystemButton>
            <svg width="16" height="15" viewBox="0 0 16 15" fill="none" stroke="#111"><path d="M.5 0v2.500h10V0M.5 15v-2.500h10V15M.5 4.500h10v6H.5zM14.500 0v3M14.500 8v7" /><path d="M13 4.200h3v3h-3z" fill="#111" stroke="none" /></svg>
          </SystemButton>
          <Pinned>
            <TaskButton><TaskIcon><CopilotIcon id="task" size={24} /></TaskIcon></TaskButton>
            <TaskButton $state="open"><TaskIcon><ExplorerIcon /></TaskIcon></TaskButton>
            <TaskButton><TaskIcon><OutlookIcon /></TaskIcon></TaskButton>
            <TaskButton $state="open"><TaskIcon><ChromeIcon /></TaskIcon></TaskButton>
            <TaskButton $state="open"><TaskIcon><CodeIcon /></TaskIcon></TaskButton>
            <TaskButton $state="open"><TaskIcon><NotepadIcon /></TaskIcon></TaskButton>
            <TaskButton $state="open"><TaskIcon><SpyderIcon /></TaskIcon></TaskButton>
            <TaskButton $state="open"><TaskIcon><AnacondaIcon /></TaskIcon></TaskButton>
            <TaskButton $state="active"><TaskIcon><EdgeIcon /></TaskIcon></TaskButton>
            <TaskButton $state="open"><TaskIcon><TerminalIcon /></TaskIcon></TaskButton>
          </Pinned>
          <Weather>
            <svg width="24" height="24" viewBox="0 0 24 24">
              <defs><linearGradient id="sun" x1="0" x2="1" y1="0" y2="1"><stop offset="0" stopColor="#fbb52c" /><stop offset="1" stopColor="#ef6d1c" /></linearGradient></defs>
              <circle cx="12" cy="12" r="10" fill="url(#sun)" />
              <CloudShape x={0.5} y={0.5} />
              <CloudShape x={11} y={14} />
            </svg>
            <span>31°C</span><span>Partly sunny</span>
          </Weather>
          <Tray>
            <svg width="12" height="8" viewBox="0 0 12 8" fill="none" stroke="#111" strokeWidth="1.100"><path d="M.5 7L6 1.500 11.500 7" /></svg>
            <svg width="17" height="14" viewBox="0 0 17 14" fill="none" stroke="#111"><path d="M.6 5h2.600L6.300 1.700v10.600L3.200 9H.6zM8.500 5c.8 1.200.8 2.800 0 4M11 3.200c2 2.200 2 5.400 0 7.600M13.500 1.500c3 3.300 3 7.700 0 11" /></svg>
            <svg width="17" height="16" viewBox="0 0 17 16"><path d="M3.500 10.500a3.200 3.200 0 0 1-.3-6.300A5 5 0 0 1 12.500 3.500a4 4 0 0 1 2.500 3v4z" fill="#8b8b8b" stroke="#222" /><circle cx="11.800" cy="10.500" r="4.800" fill="#fff" /><path d="M8.500 10a3.300 3.300 0 0 1 6-1.500M15 11a3.300 3.300 0 0 1-6 1.500M14.700 6.500v2.200h-2.200M8.800 14.500v-2.200H11" fill="none" stroke="#1677d2" strokeWidth="1.300" /></svg>
            <svg width="15" height="14" viewBox="0 0 15 14" fill="none" stroke="#222"><path d="M1 13.500C1 6 6.500 1.500 13 1.500M4 13.500C4 8 8 4.500 13 4.500M7 13.500c0-3.500 2.500-6 6-6M10 13.500c0-2 1-3 3-3" /><circle cx="12" cy="12.500" r="1" fill="#222" /></svg>
            <Clock>3:58 PM<br />5/7/2025</Clock>
          </Tray>
          <TrayEnd>
            <svg width="16" height="16" viewBox="0 0 16 16" fill="none" stroke="#111" strokeWidth="1.100"><path d="M.6.8h14.800v11.400h-5L8 15l-2.400-2.800h-5z" /></svg>
          </TrayEnd>
        </TaskBar>
      </Screen>
    </>
  );
}
